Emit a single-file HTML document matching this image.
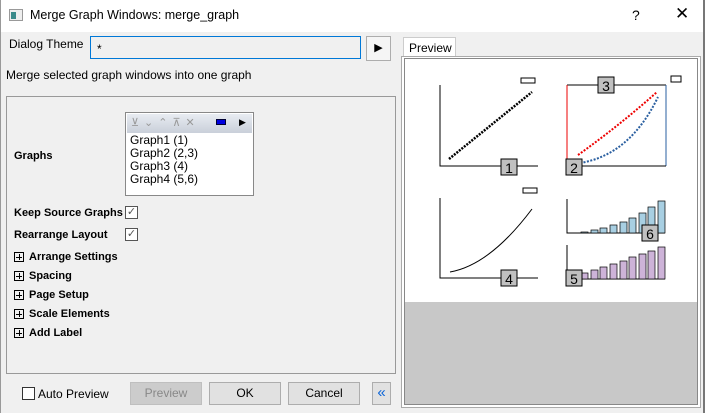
<!DOCTYPE html>
<html><head><style>
*{margin:0;padding:0;box-sizing:border-box}
body{width:705px;height:413px;background:#f0f0f0;font-family:"Liberation Sans",sans-serif;font-size:12px;color:#000;position:relative;overflow:hidden}
.a{position:absolute}
.b{font-weight:bold;font-size:11px}
.btn{position:absolute;background:#e1e1e1;border:1px solid #adadad;text-align:center;line-height:21px;height:23px}
.cb{position:absolute;width:13px;height:13px;border:1px solid #333;background:#fff}
.pl{position:absolute;width:10px;height:10px;border:1px solid #000;left:14px}
.pl:before{content:"";position:absolute;left:1px;top:3.5px;width:6px;height:1px;background:#000}
.pl:after{content:"";position:absolute;left:3.5px;top:1px;width:1px;height:6px;background:#000}
</style></head><body>
<div class="a" style="left:0;top:0;width:705px;height:32px;background:#fff"></div>
<div class="a" style="left:703px;top:0;width:2px;height:413px;background:#777"></div>
<div class="a" style="left:0;top:0;width:1px;height:413px;background:#999"></div>
<div class="a" style="left:9px;top:9px;width:14px;height:12px;border:1px solid #999;background:#eee"><div class="a" style="left:1px;top:2px;width:5px;height:7px;background:#3a8a8a"></div></div>
<div class="a" style="left:30px;top:8px;font-size:12.5px">Merge Graph Windows: merge_graph</div>
<div class="a" style="left:632px;top:7px;font-size:14px">?</div>
<div class="a" style="left:675px;top:4px;font-size:17px">✕</div>

<div class="a" style="left:9px;top:37px">Dialog Theme</div>
<div class="a" style="left:90px;top:36px;width:271px;height:23px;border:1px solid #0078d7;background:#f0f0f0"><span class="a" style="left:6px;top:5px">*</span></div>
<div class="btn" style="left:366px;top:36px;width:25px;height:25px;background:#f5f5f5;font-size:11px;line-height:23px">▶</div>
<div class="a" style="left:6px;top:68px">Merge selected graph windows into one graph</div>

<div class="a" style="left:6px;top:96px;width:390px;height:278px;border:1px solid #999"></div>
<div class="a b" style="left:14px;top:150px">Graphs</div>
<div class="a" style="left:125px;top:112px;width:129px;height:84px;border:1px solid #888;background:#fff">
<div class="a" style="left:1px;top:1px;width:125px;height:19px;background:linear-gradient(#e8ecf2,#c9cfd9)"></div>
<div class="a" style="left:5px;top:3px;font-size:11px;color:#999;letter-spacing:5px">⊻⌄⌃⊼✕</div>
<div class="a" style="left:90px;top:6px;width:10px;height:6px;background:#0000e0;border:1px solid #003"></div>
<div class="a" style="left:113px;top:4px;font-size:9px">▶</div>
<div class="a" style="left:4px;top:21px;line-height:13px">Graph1 (1)<br>Graph2 (2,3)<br>Graph3 (4)<br>Graph4 (5,6)</div>
</div>
<div class="a b" style="left:14px;top:207px">Keep Source Graphs</div>
<div class="cb" style="left:125px;top:206px;border-color:#555;font-size:11px;line-height:11px;color:#555;text-align:center">✓</div>
<div class="a b" style="left:14px;top:229px">Rearrange Layout</div>
<div class="cb" style="left:125px;top:228px;border-color:#555;font-size:11px;line-height:11px;color:#555;text-align:center">✓</div>
<div class="pl" style="top:252px"></div><div class="a b" style="left:29px;top:251px">Arrange Settings</div>
<div class="pl" style="top:271px"></div><div class="a b" style="left:29px;top:270px">Spacing</div>
<div class="pl" style="top:290px"></div><div class="a b" style="left:29px;top:289px">Page Setup</div>
<div class="pl" style="top:309px"></div><div class="a b" style="left:29px;top:308px">Scale Elements</div>
<div class="pl" style="top:328px"></div><div class="a b" style="left:29px;top:327px">Add Label</div>

<div class="cb" style="left:22px;top:387px"></div>
<div class="a" style="left:38px;top:387px">Auto Preview</div>
<div class="btn" style="left:130px;top:382px;width:72px;background:#ccc;border-color:#bfbfbf;color:#888">Preview</div>
<div class="btn" style="left:209px;top:382px;width:72px">OK</div>
<div class="btn" style="left:288px;top:382px;width:72px">Cancel</div>
<div class="btn" style="left:372px;top:382px;width:19px;color:#0a64d8;font-size:15px;line-height:19px">«</div>

<div class="a" style="left:403px;top:37px;width:53px;height:20px;background:#fff;border:1px solid #ccc;border-bottom:none;padding:3px 0 0 5px">Preview</div>
<div class="a" style="left:401px;top:56px;width:300px;height:352px;border:1px solid #aaa;background:#fff"></div>
<div class="a" style="left:404px;top:58px;width:294px;height:347px;border:1px solid #888;background:#c8c8c8"></div>
<svg class="a" style="left:405px;top:59px" width="292" height="243" viewBox="405 59 292 243">
<rect x="405" y="59" width="292" height="243" fill="#fff"/>
<g stroke="#000" stroke-width="1" fill="none">
<path d="M440 85V166H538"/><path d="M440 198V278H538"/>
<path d="M567 199V233H665"/><path d="M567 245V279H665"/>
<rect x="521" y="78" width="14" height="5"/><rect x="523" y="188" width="14" height="5"/>
<path d="M567 85H666" /></g>
<path d="M567 85V166" stroke="#e00"/><path d="M666 85V166" stroke="#2a5fa0"/><path d="M567 166H666" stroke="#000"/>
<rect x="671" y="76" width="10" height="6" fill="none" stroke="#000"/>
<path d="M449 159L532 92" stroke="#000" stroke-width="2.5" stroke-dasharray="2 1.2"/>
<path d="M578 155Q620 125 657 92" stroke="#e00" stroke-width="2" stroke-dasharray="2 1.5" fill="none"/>
<path d="M580 163Q630 155 658 97" stroke="#2a5fa0" stroke-width="2" stroke-dasharray="2 1.5" fill="none"/>
<path d="M450 272Q490 265 532 209" stroke="#000" fill="none"/>
<g fill="#a8cfe2" stroke="#000" stroke-width=".7">
<rect x="581" y="232" width="7" height="1"/><rect x="591" y="230" width="7" height="3"/><rect x="600" y="228" width="7" height="5"/><rect x="610" y="225" width="7" height="8"/><rect x="620" y="222" width="7" height="11"/><rect x="629" y="218" width="7" height="15"/><rect x="639" y="213" width="7" height="20"/><rect x="648" y="207" width="7" height="26"/><rect x="658" y="201" width="7" height="32"/></g>
<g fill="#cdb3d8" stroke="#000" stroke-width=".7">
<rect x="572" y="276" width="7" height="3"/><rect x="581" y="273" width="7" height="6"/><rect x="591" y="270" width="7" height="9"/><rect x="600" y="267" width="7" height="12"/><rect x="610" y="264" width="7" height="15"/><rect x="620" y="261" width="7" height="18"/><rect x="629" y="257" width="7" height="22"/><rect x="639" y="254" width="7" height="25"/><rect x="648" y="251" width="7" height="28"/><rect x="658" y="247" width="7" height="32"/></g>
<g font-family="Liberation Sans" font-size="14" text-anchor="middle">
<rect x="501" y="159" width="16" height="16" fill="#c0c0c0" stroke="#000"/><text x="509" y="173">1</text>
<rect x="566" y="159" width="16" height="16" fill="#c0c0c0" stroke="#000"/><text x="574" y="173">2</text>
<rect x="598" y="77" width="16" height="16" fill="#c0c0c0" stroke="#000"/><text x="606" y="91">3</text>
<rect x="501" y="270" width="16" height="16" fill="#c0c0c0" stroke="#000"/><text x="509" y="284">4</text>
<rect x="566" y="270" width="16" height="16" fill="#c0c0c0" stroke="#000"/><text x="574" y="284">5</text>
<rect x="642" y="225" width="16" height="16" fill="#c0c0c0" stroke="#000"/><text x="650" y="239">6</text>
</g>
</svg>
</body></html>
